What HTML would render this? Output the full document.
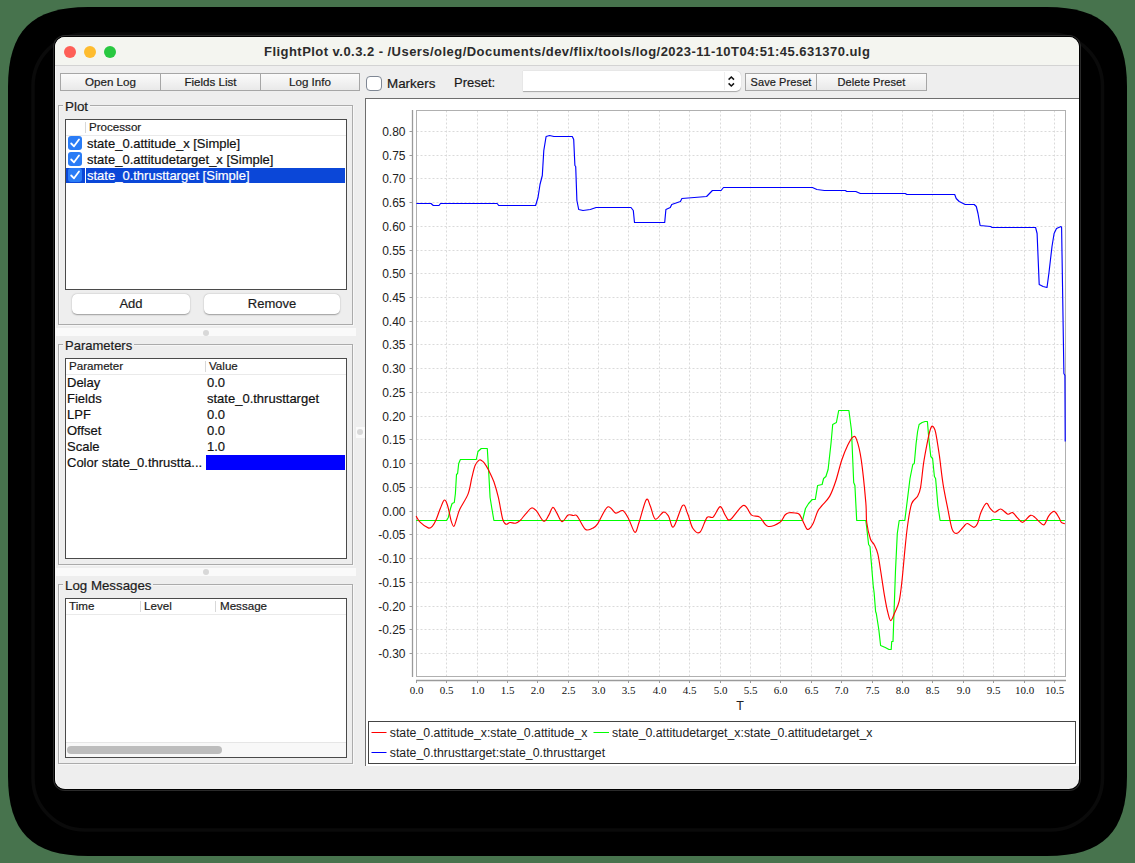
<!DOCTYPE html>
<html><head><meta charset="utf-8">
<style>
*{box-sizing:border-box;margin:0;padding:0}
html,body{width:1135px;height:863px;overflow:hidden;background:#47734d}
body{position:relative;font-family:"Liberation Sans",sans-serif;color:#1a1a1a;-webkit-text-stroke:0.2px currentColor}
.a{position:absolute}
#shadow{left:8px;top:7px;width:1119px;height:848px;background:#000;border-radius:78px}
#ring{left:33px;top:34px;width:1071px;height:797px;border:2px solid #141414;border-radius:48px}
#win{left:55px;top:37px;width:1024px;height:752px;background:#eeeeee;border-radius:10px;overflow:hidden;box-shadow:inset 1px 0 0 #f8f8f8,0 0 0 1px #000,0 0 0 2px #2a2a2a}
#title{left:0;top:0;width:1024px;height:29px;background:#f4f5f0;border-bottom:1px solid #d3d3d3}
.tl-dot{position:absolute;top:9px;width:12px;height:12px;border-radius:50%}
#ttext{-webkit-text-stroke:0;left:264px;top:44px;font-size:13px;font-weight:bold;letter-spacing:0.46px;color:#2b2b2b;white-space:nowrap}
.btn{position:absolute;height:18px;border:1px solid #a6a6a6;background:linear-gradient(#fbfbfb,#e9e9e9);font-size:11.6px;text-align:center;line-height:16px;color:#1c1c1c}
.gb{position:absolute;border:1px solid #ababab;box-shadow:inset 1px 1px 0 #f7f7f7, 1px 1px 0 #f7f7f7}
.gbt{position:absolute;background:#eeeeee;font-size:13px;padding:0 2px;line-height:14px;color:#1c1c1c}
.tbl{position:absolute;background:#fff;border:1px solid #4a4a4a}
.th{position:absolute;font-size:11.6px;color:#1c1c1c;white-space:nowrap}
.td{position:absolute;font-size:13px;color:#111;white-space:nowrap}
.sep{position:absolute;width:1px;background:#d8d8d8}
.split{position:absolute;background:#fafafa}
.dot{position:absolute;width:6px;height:6px;border-radius:50%;background:#d8d8d8}
.cb{position:absolute;width:14px;height:14px;border-radius:3px;background:#2a7cf6}
.pbtn{position:absolute;height:20px;background:#fff;border-radius:5px;box-shadow:0 0.5px 1.5px rgba(0,0,0,0.35);font-size:13px;text-align:center;line-height:20px;color:#1c1c1c}
svg text.yl{font-family:"Liberation Sans",sans-serif;font-size:12px;fill:#222}
svg text.xl{font-family:"Liberation Serif",serif;font-size:11px;fill:#111}
svg text.tl{font-family:"Liberation Sans",sans-serif;font-size:12.5px;fill:#222}
svg text.lg{font-family:"Liberation Sans",sans-serif;font-size:12.3px;fill:#222}
.g{stroke:#dadada;stroke-width:1;stroke-dasharray:2,2}
</style></head><body>
<svg class="a" style="left:0;top:0" width="1135" height="863"><path d="M88,7 L1047,7 C1103.0,7 1127,31.000000000000004 1127,87 L1127,776 C1127,832.0 1103.0,856 1047,856 L88,856 C32.0,856 8,832.0 8,776 L8,87 C8,31.000000000000004 32.0,7 88,7 Z" fill="#000"/><rect x="33" y="34" width="1069.5" height="796" rx="52" ry="52" fill="none" stroke="#0a0a0a" stroke-width="3.5"/></svg>
<div id="win" class="a">
  <div id="title" class="a">
    <div class="tl-dot" style="left:9px;background:#fe5f57"></div>
    <div class="tl-dot" style="left:29px;background:#febc2e"></div>
    <div class="tl-dot" style="left:49px;background:#28c840"></div>
  </div>
</div>
<div id="ttext" class="a">FlightPlot v.0.3.2 - /Users/oleg/Documents/dev/flix/tools/log/2023-11-10T04:51:45.631370.ulg</div>

<!-- toolbar -->
<div class="btn" style="left:60px;top:73px;width:101px">Open Log</div>
<div class="btn" style="left:160px;top:73px;width:101px">Fields List</div>
<div class="btn" style="left:260px;top:73px;width:100px">Log Info</div>
<div class="a" style="left:366px;top:75.5px;width:15.5px;height:15px;border:1.2px solid #7f8794;border-radius:4px;background:#fff"></div>
<div class="a" style="left:387px;top:76px;font-size:13.4px">Markers</div>
<div class="a" style="left:454px;top:74.5px;font-size:13px">Preset:</div>
<div class="a" style="left:523px;top:71px;width:218px;height:20px;background:#fff;border-radius:0 5px 5px 0;box-shadow:0 0.5px 1px rgba(0,0,0,0.3)"></div>
<div class="a" style="left:724px;top:72px;width:1px;height:18px;background:#eee"></div>
<svg class="a" style="left:726px;top:73px" width="12" height="16"><path d="M2.6,6.6 L5.3,4 L8,6.6 M2.6,10.4 L5.3,13 L8,10.4" fill="none" stroke="#111" stroke-width="1.5"/></svg>
<div class="btn" style="left:745px;top:73px;width:72px;font-size:11px;letter-spacing:0.1px">Save Preset</div>
<div class="btn" style="left:816px;top:73px;width:111px;font-size:11px;letter-spacing:0.1px">Delete Preset</div>

<!-- Plot group -->
<div class="gb" style="left:58px;top:105px;width:295px;height:220px"></div>
<div class="gbt" style="left:63px;top:99.5px;font-size:13.4px">Plot</div>
<div class="tbl" style="left:65px;top:119px;width:282px;height:171px"></div>
<div class="sep" style="left:85px;top:122px;height:11px"></div>
<div class="a" style="left:66px;top:135px;width:280px;height:1px;background:#eaeaea"></div>
<div class="th" style="left:89px;top:120px">Processor</div>
<div class="a" style="left:66px;top:168px;width:19px;height:15px;background:#0b47d8"></div>
<div class="a" style="left:86px;top:168px;width:259px;height:15px;background:#0b47d8"></div>
<div class="cb" style="left:68px;top:136px"></div>
<div class="cb" style="left:68px;top:152px"></div>
<div class="cb" style="left:68px;top:168px"></div>
<svg class="a" style="left:68px;top:136px" width="14" height="48"><path d="M3.2,7.5 L6,10.3 L11,3.5 M3.2,23.5 L6,26.3 L11,19.5 M3.2,39.5 L6,42.3 L11,35.5" fill="none" stroke="#fff" stroke-width="1.8" stroke-linecap="round" stroke-linejoin="round"/></svg>
<div class="td" style="left:87px;top:136px">state_0.attitude_x [Simple]</div>
<div class="td" style="left:87px;top:152px">state_0.attitudetarget_x [Simple]</div>
<div class="td" style="left:87px;top:168px;color:#fff">state_0.thrusttarget [Simple]</div>
<div class="pbtn" style="left:72px;top:294px;width:118px">Add</div>
<div class="pbtn" style="left:204px;top:294px;width:136px">Remove</div>

<div class="split" style="left:56px;top:328px;width:300px;height:8px"></div>
<div class="dot" style="left:203px;top:329.5px"></div>

<!-- Parameters group -->
<div class="gb" style="left:58px;top:344px;width:295px;height:221px"></div>
<div class="gbt" style="left:63px;top:339px">Parameters</div>
<div class="tbl" style="left:65px;top:358px;width:282px;height:201px"></div>
<div class="sep" style="left:205px;top:361px;height:11px"></div>
<div class="a" style="left:66px;top:374px;width:280px;height:1px;background:#eaeaea"></div>
<div class="th" style="left:69px;top:359px">Parameter</div>
<div class="th" style="left:209px;top:359px">Value</div>
<div class="td" style="left:67px;top:375px">Delay</div><div class="td" style="left:207px;top:375px">0.0</div>
<div class="td" style="left:67px;top:391px">Fields</div><div class="td" style="left:207px;top:391px">state_0.thrusttarget</div>
<div class="td" style="left:67px;top:407px">LPF</div><div class="td" style="left:207px;top:407px">0.0</div>
<div class="td" style="left:67px;top:423px">Offset</div><div class="td" style="left:207px;top:423px">0.0</div>
<div class="td" style="left:67px;top:439px">Scale</div><div class="td" style="left:207px;top:439px">1.0</div>
<div class="td" style="left:67px;top:455px">Color state_0.thrustta...</div>
<div class="a" style="left:206px;top:455px;width:139px;height:15px;background:#0000ff"></div>

<div class="split" style="left:56px;top:568px;width:300px;height:8px"></div>
<div class="dot" style="left:203px;top:569px"></div>

<!-- Log Messages group -->
<div class="gb" style="left:58px;top:584px;width:295px;height:180px"></div>
<div class="gbt" style="left:63px;top:579px;font-size:13.3px">Log Messages</div>
<div class="tbl" style="left:65px;top:598px;width:282px;height:160px"></div>
<div class="sep" style="left:140px;top:601px;height:11px"></div>
<div class="sep" style="left:215px;top:601px;height:11px"></div>
<div class="a" style="left:66px;top:614px;width:280px;height:1px;background:#eaeaea"></div>
<div class="th" style="left:69px;top:599px">Time</div>
<div class="th" style="left:144px;top:599px">Level</div>
<div class="th" style="left:220px;top:599px">Message</div>
<div class="a" style="left:66px;top:742px;width:280px;height:15px;background:#f8f8f8;border-top:1px solid #e6e6e6"></div>
<div class="a" style="left:67px;top:746px;width:155px;height:8px;border-radius:4px;background:#bdbdbd"></div>

<!-- vertical splitter dot -->
<div class="a" style="left:356px;top:427px;width:9px;height:11px;background:#fafafa"></div><div class="dot" style="left:357.3px;top:429.3px"></div>

<!-- chart panel -->
<div class="a" style="left:365px;top:98px;width:714px;height:668px;background:#fff;border-top:1px solid #6e6e6e;border-left:1px solid #6e6e6e"></div>
<svg class="a" style="left:0;top:0" width="1135" height="863">
<line x1="446.5" y1="110.5" x2="446.5" y2="676.5" class="g"/>
<line x1="477.5" y1="110.5" x2="477.5" y2="676.5" class="g"/>
<line x1="507.5" y1="110.5" x2="507.5" y2="676.5" class="g"/>
<line x1="537.5" y1="110.5" x2="537.5" y2="676.5" class="g"/>
<line x1="568.5" y1="110.5" x2="568.5" y2="676.5" class="g"/>
<line x1="598.5" y1="110.5" x2="598.5" y2="676.5" class="g"/>
<line x1="628.5" y1="110.5" x2="628.5" y2="676.5" class="g"/>
<line x1="659.5" y1="110.5" x2="659.5" y2="676.5" class="g"/>
<line x1="689.5" y1="110.5" x2="689.5" y2="676.5" class="g"/>
<line x1="720.5" y1="110.5" x2="720.5" y2="676.5" class="g"/>
<line x1="750.5" y1="110.5" x2="750.5" y2="676.5" class="g"/>
<line x1="780.5" y1="110.5" x2="780.5" y2="676.5" class="g"/>
<line x1="811.5" y1="110.5" x2="811.5" y2="676.5" class="g"/>
<line x1="841.5" y1="110.5" x2="841.5" y2="676.5" class="g"/>
<line x1="872.5" y1="110.5" x2="872.5" y2="676.5" class="g"/>
<line x1="902.5" y1="110.5" x2="902.5" y2="676.5" class="g"/>
<line x1="932.5" y1="110.5" x2="932.5" y2="676.5" class="g"/>
<line x1="963.5" y1="110.5" x2="963.5" y2="676.5" class="g"/>
<line x1="993.5" y1="110.5" x2="993.5" y2="676.5" class="g"/>
<line x1="1024.5" y1="110.5" x2="1024.5" y2="676.5" class="g"/>
<line x1="1054.5" y1="110.5" x2="1054.5" y2="676.5" class="g"/>
<line x1="416.5" y1="131.5" x2="1065.5" y2="131.5" class="g"/>
<line x1="416.5" y1="155.5" x2="1065.5" y2="155.5" class="g"/>
<line x1="416.5" y1="178.5" x2="1065.5" y2="178.5" class="g"/>
<line x1="416.5" y1="202.5" x2="1065.5" y2="202.5" class="g"/>
<line x1="416.5" y1="226.5" x2="1065.5" y2="226.5" class="g"/>
<line x1="416.5" y1="250.5" x2="1065.5" y2="250.5" class="g"/>
<line x1="416.5" y1="273.5" x2="1065.5" y2="273.5" class="g"/>
<line x1="416.5" y1="297.5" x2="1065.5" y2="297.5" class="g"/>
<line x1="416.5" y1="321.5" x2="1065.5" y2="321.5" class="g"/>
<line x1="416.5" y1="344.5" x2="1065.5" y2="344.5" class="g"/>
<line x1="416.5" y1="368.5" x2="1065.5" y2="368.5" class="g"/>
<line x1="416.5" y1="392.5" x2="1065.5" y2="392.5" class="g"/>
<line x1="416.5" y1="416.5" x2="1065.5" y2="416.5" class="g"/>
<line x1="416.5" y1="439.5" x2="1065.5" y2="439.5" class="g"/>
<line x1="416.5" y1="463.5" x2="1065.5" y2="463.5" class="g"/>
<line x1="416.5" y1="487.5" x2="1065.5" y2="487.5" class="g"/>
<line x1="416.5" y1="511.5" x2="1065.5" y2="511.5" class="g"/>
<line x1="416.5" y1="534.5" x2="1065.5" y2="534.5" class="g"/>
<line x1="416.5" y1="558.5" x2="1065.5" y2="558.5" class="g"/>
<line x1="416.5" y1="582.5" x2="1065.5" y2="582.5" class="g"/>
<line x1="416.5" y1="606.5" x2="1065.5" y2="606.5" class="g"/>
<line x1="416.5" y1="629.5" x2="1065.5" y2="629.5" class="g"/>
<line x1="416.5" y1="653.5" x2="1065.5" y2="653.5" class="g"/>
<rect x="416.5" y="110.5" width="649.0" height="566.0" fill="none" stroke="#b0b0b0" stroke-width="1"/>
<line x1="412.5" y1="110" x2="412.5" y2="677" stroke="#9a9a9a" stroke-width="1.3"/>
<line x1="416" y1="680.5" x2="1066" y2="680.5" stroke="#9a9a9a" stroke-width="1.3"/>
<line x1="409.5" y1="131.5" x2="412.5" y2="131.5" stroke="#9a9a9a" stroke-width="1"/>
<text x="405.5" y="136.3" text-anchor="end" class="yl">0.80</text>
<line x1="409.5" y1="155.5" x2="412.5" y2="155.5" stroke="#9a9a9a" stroke-width="1"/>
<text x="405.5" y="160.3" text-anchor="end" class="yl">0.75</text>
<line x1="409.5" y1="178.5" x2="412.5" y2="178.5" stroke="#9a9a9a" stroke-width="1"/>
<text x="405.5" y="183.3" text-anchor="end" class="yl">0.70</text>
<line x1="409.5" y1="202.5" x2="412.5" y2="202.5" stroke="#9a9a9a" stroke-width="1"/>
<text x="405.5" y="207.3" text-anchor="end" class="yl">0.65</text>
<line x1="409.5" y1="226.5" x2="412.5" y2="226.5" stroke="#9a9a9a" stroke-width="1"/>
<text x="405.5" y="231.3" text-anchor="end" class="yl">0.60</text>
<line x1="409.5" y1="250.5" x2="412.5" y2="250.5" stroke="#9a9a9a" stroke-width="1"/>
<text x="405.5" y="255.3" text-anchor="end" class="yl">0.55</text>
<line x1="409.5" y1="273.5" x2="412.5" y2="273.5" stroke="#9a9a9a" stroke-width="1"/>
<text x="405.5" y="278.3" text-anchor="end" class="yl">0.50</text>
<line x1="409.5" y1="297.5" x2="412.5" y2="297.5" stroke="#9a9a9a" stroke-width="1"/>
<text x="405.5" y="302.3" text-anchor="end" class="yl">0.45</text>
<line x1="409.5" y1="321.5" x2="412.5" y2="321.5" stroke="#9a9a9a" stroke-width="1"/>
<text x="405.5" y="326.3" text-anchor="end" class="yl">0.40</text>
<line x1="409.5" y1="344.5" x2="412.5" y2="344.5" stroke="#9a9a9a" stroke-width="1"/>
<text x="405.5" y="349.3" text-anchor="end" class="yl">0.35</text>
<line x1="409.5" y1="368.5" x2="412.5" y2="368.5" stroke="#9a9a9a" stroke-width="1"/>
<text x="405.5" y="373.3" text-anchor="end" class="yl">0.30</text>
<line x1="409.5" y1="392.5" x2="412.5" y2="392.5" stroke="#9a9a9a" stroke-width="1"/>
<text x="405.5" y="397.3" text-anchor="end" class="yl">0.25</text>
<line x1="409.5" y1="416.5" x2="412.5" y2="416.5" stroke="#9a9a9a" stroke-width="1"/>
<text x="405.5" y="421.3" text-anchor="end" class="yl">0.20</text>
<line x1="409.5" y1="439.5" x2="412.5" y2="439.5" stroke="#9a9a9a" stroke-width="1"/>
<text x="405.5" y="444.3" text-anchor="end" class="yl">0.15</text>
<line x1="409.5" y1="463.5" x2="412.5" y2="463.5" stroke="#9a9a9a" stroke-width="1"/>
<text x="405.5" y="468.3" text-anchor="end" class="yl">0.10</text>
<line x1="409.5" y1="487.5" x2="412.5" y2="487.5" stroke="#9a9a9a" stroke-width="1"/>
<text x="405.5" y="492.3" text-anchor="end" class="yl">0.05</text>
<line x1="409.5" y1="511.5" x2="412.5" y2="511.5" stroke="#9a9a9a" stroke-width="1"/>
<text x="405.5" y="516.3" text-anchor="end" class="yl">0.00</text>
<line x1="409.5" y1="534.5" x2="412.5" y2="534.5" stroke="#9a9a9a" stroke-width="1"/>
<text x="405.5" y="539.3" text-anchor="end" class="yl">-0.05</text>
<line x1="409.5" y1="558.5" x2="412.5" y2="558.5" stroke="#9a9a9a" stroke-width="1"/>
<text x="405.5" y="563.3" text-anchor="end" class="yl">-0.10</text>
<line x1="409.5" y1="582.5" x2="412.5" y2="582.5" stroke="#9a9a9a" stroke-width="1"/>
<text x="405.5" y="587.3" text-anchor="end" class="yl">-0.15</text>
<line x1="409.5" y1="606.5" x2="412.5" y2="606.5" stroke="#9a9a9a" stroke-width="1"/>
<text x="405.5" y="611.3" text-anchor="end" class="yl">-0.20</text>
<line x1="409.5" y1="629.5" x2="412.5" y2="629.5" stroke="#9a9a9a" stroke-width="1"/>
<text x="405.5" y="634.3" text-anchor="end" class="yl">-0.25</text>
<line x1="409.5" y1="653.5" x2="412.5" y2="653.5" stroke="#9a9a9a" stroke-width="1"/>
<text x="405.5" y="658.3" text-anchor="end" class="yl">-0.30</text>
<line x1="416.5" y1="680.5" x2="416.5" y2="683" stroke="#9a9a9a" stroke-width="1"/>
<text x="416.5" y="693.8" text-anchor="middle" class="xl">0.0</text>
<line x1="446.5" y1="680.5" x2="446.5" y2="683" stroke="#9a9a9a" stroke-width="1"/>
<text x="446.5" y="693.8" text-anchor="middle" class="xl">0.5</text>
<line x1="477.5" y1="680.5" x2="477.5" y2="683" stroke="#9a9a9a" stroke-width="1"/>
<text x="477.5" y="693.8" text-anchor="middle" class="xl">1.0</text>
<line x1="507.5" y1="680.5" x2="507.5" y2="683" stroke="#9a9a9a" stroke-width="1"/>
<text x="507.5" y="693.8" text-anchor="middle" class="xl">1.5</text>
<line x1="537.5" y1="680.5" x2="537.5" y2="683" stroke="#9a9a9a" stroke-width="1"/>
<text x="537.5" y="693.8" text-anchor="middle" class="xl">2.0</text>
<line x1="568.5" y1="680.5" x2="568.5" y2="683" stroke="#9a9a9a" stroke-width="1"/>
<text x="568.5" y="693.8" text-anchor="middle" class="xl">2.5</text>
<line x1="598.5" y1="680.5" x2="598.5" y2="683" stroke="#9a9a9a" stroke-width="1"/>
<text x="598.5" y="693.8" text-anchor="middle" class="xl">3.0</text>
<line x1="628.5" y1="680.5" x2="628.5" y2="683" stroke="#9a9a9a" stroke-width="1"/>
<text x="628.5" y="693.8" text-anchor="middle" class="xl">3.5</text>
<line x1="659.5" y1="680.5" x2="659.5" y2="683" stroke="#9a9a9a" stroke-width="1"/>
<text x="659.5" y="693.8" text-anchor="middle" class="xl">4.0</text>
<line x1="689.5" y1="680.5" x2="689.5" y2="683" stroke="#9a9a9a" stroke-width="1"/>
<text x="689.5" y="693.8" text-anchor="middle" class="xl">4.5</text>
<line x1="720.5" y1="680.5" x2="720.5" y2="683" stroke="#9a9a9a" stroke-width="1"/>
<text x="720.5" y="693.8" text-anchor="middle" class="xl">5.0</text>
<line x1="750.5" y1="680.5" x2="750.5" y2="683" stroke="#9a9a9a" stroke-width="1"/>
<text x="750.5" y="693.8" text-anchor="middle" class="xl">5.5</text>
<line x1="780.5" y1="680.5" x2="780.5" y2="683" stroke="#9a9a9a" stroke-width="1"/>
<text x="780.5" y="693.8" text-anchor="middle" class="xl">6.0</text>
<line x1="811.5" y1="680.5" x2="811.5" y2="683" stroke="#9a9a9a" stroke-width="1"/>
<text x="811.5" y="693.8" text-anchor="middle" class="xl">6.5</text>
<line x1="841.5" y1="680.5" x2="841.5" y2="683" stroke="#9a9a9a" stroke-width="1"/>
<text x="841.5" y="693.8" text-anchor="middle" class="xl">7.0</text>
<line x1="872.5" y1="680.5" x2="872.5" y2="683" stroke="#9a9a9a" stroke-width="1"/>
<text x="872.5" y="693.8" text-anchor="middle" class="xl">7.5</text>
<line x1="902.5" y1="680.5" x2="902.5" y2="683" stroke="#9a9a9a" stroke-width="1"/>
<text x="902.5" y="693.8" text-anchor="middle" class="xl">8.0</text>
<line x1="932.5" y1="680.5" x2="932.5" y2="683" stroke="#9a9a9a" stroke-width="1"/>
<text x="932.5" y="693.8" text-anchor="middle" class="xl">8.5</text>
<line x1="963.5" y1="680.5" x2="963.5" y2="683" stroke="#9a9a9a" stroke-width="1"/>
<text x="963.5" y="693.8" text-anchor="middle" class="xl">9.0</text>
<line x1="993.5" y1="680.5" x2="993.5" y2="683" stroke="#9a9a9a" stroke-width="1"/>
<text x="993.5" y="693.8" text-anchor="middle" class="xl">9.5</text>
<line x1="1024.5" y1="680.5" x2="1024.5" y2="683" stroke="#9a9a9a" stroke-width="1"/>
<text x="1024.5" y="693.8" text-anchor="middle" class="xl">10.0</text>
<line x1="1054.5" y1="680.5" x2="1054.5" y2="683" stroke="#9a9a9a" stroke-width="1"/>
<text x="1054.5" y="693.8" text-anchor="middle" class="xl">10.5</text>
<text x="740" y="710" text-anchor="middle" class="tl">T</text>
<path d="M416.4,203.5 L431.0,203.5 L433.3,205.5 L439.0,205.5 L440.5,203.5 L497.2,203.5 L498.7,205.5 L535.6,205.5 L538.0,197.5 L540.0,184.5 L542.3,175.5 L543.8,150.5 L546.1,136.5 L549.6,135.5 L553.9,136.5 L572.3,136.5 L573.7,139.5 L574.9,165.5 L575.7,166.5 L576.9,200.5 L578.7,209.5 L583.0,210.5 L590.3,209.5 L596.1,207.5 L631.0,207.5 L633.3,210.5 L634.5,222.5 L664.7,222.5 L665.9,209.5 L670.3,207.5 L671.7,204.5 L680.4,201.5 L681.9,198.5 L706.6,196.5 L712.4,190.5 L721.1,190.5 L723.5,187.5 L812.4,187.5 L816.9,189.5 L824.4,190.5 L845.3,190.5 L846.8,191.5 L855.8,191.5 L860.3,193.5 L905.3,193.5 L906.8,194.5 L954.7,194.5 L956.2,198.5 L959.2,201.5 L965.2,204.5 L974.2,204.5 L976.3,206.5 L978.0,213.5 L980.1,225.5 L990.6,226.5 L992.1,227.5 L1035.6,227.5 L1037.1,233.5 L1039.2,284.5 L1043.1,286.5 L1047.0,287.5 L1049.0,272.5 L1050.6,258.5 L1052.0,246.5 L1054.1,233.5 L1056.5,228.5 L1061.0,226.5 L1061.6,227.5 L1063.9,373.5 L1064.9,375.5 L1065.2,441.5" fill="none" stroke="#0000ff" stroke-width="1.15" stroke-linejoin="round"/>
<path d="M416.1,520.5 L446.6,520.5 L448.3,517.5 L450.5,508.5 L452.1,503.5 L454.3,502.5 L455.4,493.5 L456.5,474.5 L457.6,473.5 L458.7,463.5 L460.4,459.5 L476.3,459.5 L478.0,451.5 L479.1,450.5 L481.3,448.5 L487.3,448.5 L488.4,466.5 L490.1,497.5 L491.7,507.5 L493.9,520.5 L802.5,520.5 L805.5,508.5 L808.6,503.5 L812.3,499.5 L815.3,499.5 L817.6,485.5 L822.1,484.5 L823.6,478.5 L825.9,476.5 L828.1,469.5 L831.1,442.5 L832.7,424.5 L836.4,422.5 L838.7,410.5 L848.9,410.5 L851.5,430.5 L853.7,482.5 L854.9,485.5 L856.7,520.5 L865.8,520.5 L866.7,527.5 L868.6,544.5 L870.0,546.5 L873.2,585.5 L874.1,592.5 L875.6,611.5 L876.3,613.5 L878.8,629.5 L880.6,645.5 L885.3,647.5 L889.0,649.5 L891.2,649.5 L891.7,641.5 L893.0,641.5 L895.5,570.5 L897.3,533.5 L899.2,520.5 L904.8,520.5 L906.3,508.5 L910.0,478.5 L912.8,464.5 L914.3,463.5 L916.1,443.5 L917.6,431.5 L919.1,424.5 L922.1,422.5 L925.1,421.5 L927.4,421.5 L928.9,439.5 L930.8,456.5 L932.6,458.5 L934.4,476.5 L935.6,478.5 L937.9,505.5 L940.1,520.5 L991.1,520.5 L992.3,519.5 L999.5,519.5 L1000.7,520.5 L1064.9,520.5" fill="none" stroke="#00ff00" stroke-width="1.15" stroke-linejoin="round"/>
<path d="M416.1,516.1 C416.8,517.1 418.1,520.2 420.1,522.2 C422.1,524.2 426.2,527.2 428.2,527.9 C430.2,528.6 430.9,527.8 432.3,526.3 C433.7,524.8 435.0,522.2 436.3,519.2 C437.6,516.2 439.0,511.4 440.4,508.2 C441.8,505.0 443.2,500.4 444.4,500.0 C445.6,499.6 446.6,502.6 447.7,506.0 C448.8,509.4 450.0,516.9 451.0,520.3 C452.0,523.7 452.9,526.6 453.8,526.4 C454.7,526.2 455.5,522.1 456.5,519.2 C457.5,516.4 457.9,513.5 459.8,509.3 C461.7,505.1 466.1,499.2 468.1,493.9 C470.1,488.6 470.7,482.2 471.9,477.4 C473.1,472.6 474.0,468.2 475.2,465.3 C476.4,462.4 478.1,460.9 479.1,460.1 C480.1,459.3 480.5,460.0 481.3,460.4 C482.1,460.8 482.8,461.1 484.0,462.6 C485.2,464.2 486.8,466.5 488.4,469.7 C490.0,472.9 492.2,477.2 493.9,481.8 C495.5,486.4 496.8,491.0 498.3,497.2 C499.8,503.4 501.4,514.7 502.7,519.2 C504.0,523.7 504.8,523.7 506.0,524.2 C507.2,524.8 508.4,522.7 510.0,522.5 C511.6,522.3 513.7,523.6 515.4,523.2 C517.1,522.8 518.7,521.7 520.4,520.2 C522.1,518.7 523.6,516.1 525.5,514.1 C527.4,512.1 529.8,508.5 531.6,508.0 C533.5,507.5 534.6,508.9 536.6,511.1 C538.6,513.3 541.7,520.5 543.7,521.2 C545.7,521.9 547.3,517.4 548.8,515.1 C550.3,512.8 551.5,507.7 552.9,507.4 C554.2,507.1 555.4,510.7 556.9,513.1 C558.4,515.5 560.1,521.3 562.0,521.6 C563.9,521.9 566.2,516.1 568.1,515.1 C570.0,514.1 571.6,515.3 573.1,515.5 C574.6,515.7 575.2,513.8 577.2,516.1 C579.2,518.4 582.8,527.3 585.3,529.3 C587.8,531.3 590.4,529.1 592.4,528.3 C594.4,527.4 594.9,527.8 597.4,524.2 C599.9,520.7 604.5,508.9 607.6,507.0 C610.7,505.1 613.2,512.5 615.7,513.1 C618.2,513.7 620.6,509.6 622.8,510.6 C625.0,511.6 626.8,515.6 628.8,519.2 C630.8,522.8 633.2,531.8 634.9,532.3 C636.6,532.8 637.2,527.6 639.1,522.2 C641.0,516.8 644.3,502.6 646.2,499.9 C648.1,497.2 648.8,502.8 650.3,506.0 C651.8,509.2 653.1,518.2 655.3,519.2 C657.5,520.2 661.2,512.6 663.4,512.1 C665.6,511.6 666.8,513.6 668.5,516.1 C670.2,518.6 671.2,528.7 673.6,526.9 C676.0,525.1 680.3,507.5 682.7,505.4 C685.1,503.3 686.1,510.3 687.8,514.1 C689.5,517.9 690.8,525.3 692.8,528.3 C694.8,531.3 697.5,534.1 699.9,532.3 C702.3,530.5 704.8,520.0 707.0,517.5 C709.2,515.0 710.9,518.9 713.1,517.1 C715.3,515.3 718.2,506.9 720.2,506.6 C722.2,506.3 723.5,512.9 725.2,515.1 C726.9,517.3 727.2,521.2 730.3,519.6 C733.3,518.0 740.0,506.1 743.5,505.4 C747.0,504.6 748.9,513.1 751.6,515.1 C754.3,517.1 757.0,515.2 759.7,517.1 C762.4,519.0 764.4,525.4 767.8,526.3 C771.2,527.1 777.1,524.1 780.0,522.2 C782.9,520.3 783.5,516.6 785.0,515.0 C786.5,513.4 787.3,513.1 789.0,512.8 C790.7,512.5 793.2,512.7 795.0,513.0 C796.8,513.3 798.0,512.8 799.5,514.5 C801.0,516.2 802.6,521.0 804.0,523.5 C805.4,526.0 806.3,529.5 807.8,529.5 C809.3,529.5 811.5,526.5 813.1,523.5 C814.7,520.5 816.1,514.4 817.6,511.4 C819.1,508.4 820.1,507.9 822.1,505.4 C824.1,502.9 827.3,500.4 829.6,496.4 C831.9,492.4 833.7,487.3 835.7,481.3 C837.7,475.3 839.7,466.2 841.7,460.2 C843.7,454.2 845.8,449.1 847.7,445.2 C849.6,441.3 851.5,437.8 853.0,436.9 C854.5,436.0 855.3,436.0 856.7,439.9 C858.1,443.8 859.8,449.8 861.3,460.2 C862.8,470.6 864.9,492.0 865.8,502.4 C866.7,512.8 865.9,516.2 866.7,522.3 C867.5,528.4 869.2,535.3 870.4,539.0 C871.6,542.7 872.9,542.0 874.1,544.5 C875.3,547.0 876.7,549.5 877.8,553.8 C878.9,558.1 879.5,563.7 880.6,570.5 C881.7,577.3 883.1,587.5 884.3,594.6 C885.5,601.7 886.9,608.9 888.0,613.2 C889.1,617.5 889.7,620.6 890.8,620.6 C891.9,620.6 893.1,616.5 894.5,613.2 C895.9,610.0 898.0,606.4 899.2,601.1 C900.4,595.8 901.0,589.8 901.9,581.6 C902.8,573.4 903.8,561.2 904.7,551.9 C905.6,542.6 906.4,534.0 907.5,526.0 C908.6,518.0 909.9,508.8 911.6,503.8 C913.3,498.9 916.1,499.1 917.6,496.3 C919.1,493.6 919.6,492.8 920.6,487.3 C921.6,481.8 922.5,470.7 923.6,463.2 C924.7,455.7 926.3,447.8 927.4,442.1 C928.5,436.5 929.5,431.9 930.4,429.3 C931.3,426.7 931.7,425.8 932.6,426.3 C933.5,426.8 934.5,427.5 935.6,432.4 C936.7,437.3 938.1,447.0 939.4,455.7 C940.6,464.4 941.7,475.5 943.1,484.3 C944.5,493.1 946.2,500.8 947.7,508.3 C949.2,515.8 950.6,525.2 952.2,529.4 C953.8,533.6 955.3,533.8 957.2,533.3 C959.1,532.8 962.1,528.1 963.8,526.5 C965.5,524.9 965.7,523.4 967.4,523.5 C969.1,523.6 972.2,527.3 973.9,527.3 C975.6,527.3 976.3,526.0 977.5,523.5 C978.7,521.0 979.5,515.6 981.0,512.2 C982.5,508.8 984.9,504.0 986.4,503.3 C987.9,502.6 988.6,506.6 990.0,508.1 C991.4,509.6 992.9,512.1 994.7,512.2 C996.5,512.4 998.5,508.7 1000.7,509.0 C1002.9,509.3 1005.8,513.6 1007.8,514.2 C1009.8,514.8 1011.0,512.0 1012.6,512.6 C1014.2,513.2 1015.6,516.0 1017.3,517.6 C1019.0,519.2 1020.5,522.7 1022.7,522.3 C1024.9,521.9 1028.3,516.2 1030.4,515.4 C1032.5,514.6 1033.8,516.6 1035.2,517.6 C1036.6,518.6 1037.2,519.9 1038.7,521.1 C1040.2,522.3 1042.4,525.6 1044.1,524.7 C1045.8,523.8 1047.1,518.0 1048.8,515.8 C1050.5,513.6 1052.5,511.1 1054.2,511.4 C1055.9,511.7 1057.8,515.8 1059.0,517.6 C1060.2,519.4 1060.3,521.3 1061.3,522.3 C1062.3,523.3 1064.3,523.5 1064.9,523.8" fill="none" stroke="#ff0000" stroke-width="1.15" stroke-linejoin="round"/>
<rect x="368.5" y="721.5" width="707" height="42" fill="#fff" stroke="#444" stroke-width="1"/>
<line x1="371.5" y1="732.5" x2="386.5" y2="732.5" stroke="#ff0000" stroke-width="1"/>
<text x="389.8" y="736.8" class="lg">state_0.attitude_x:state_0.attitude_x</text>
<line x1="593.5" y1="732.5" x2="609" y2="732.5" stroke="#00ff00" stroke-width="1"/>
<text x="612" y="736.8" class="lg">state_0.attitudetarget_x:state_0.attitudetarget_x</text>
<line x1="371.5" y1="752.5" x2="386.5" y2="752.5" stroke="#0000ff" stroke-width="1"/>
<text x="389.8" y="757.3" class="lg">state_0.thrusttarget:state_0.thrusttarget</text>
</svg>
</body></html>
